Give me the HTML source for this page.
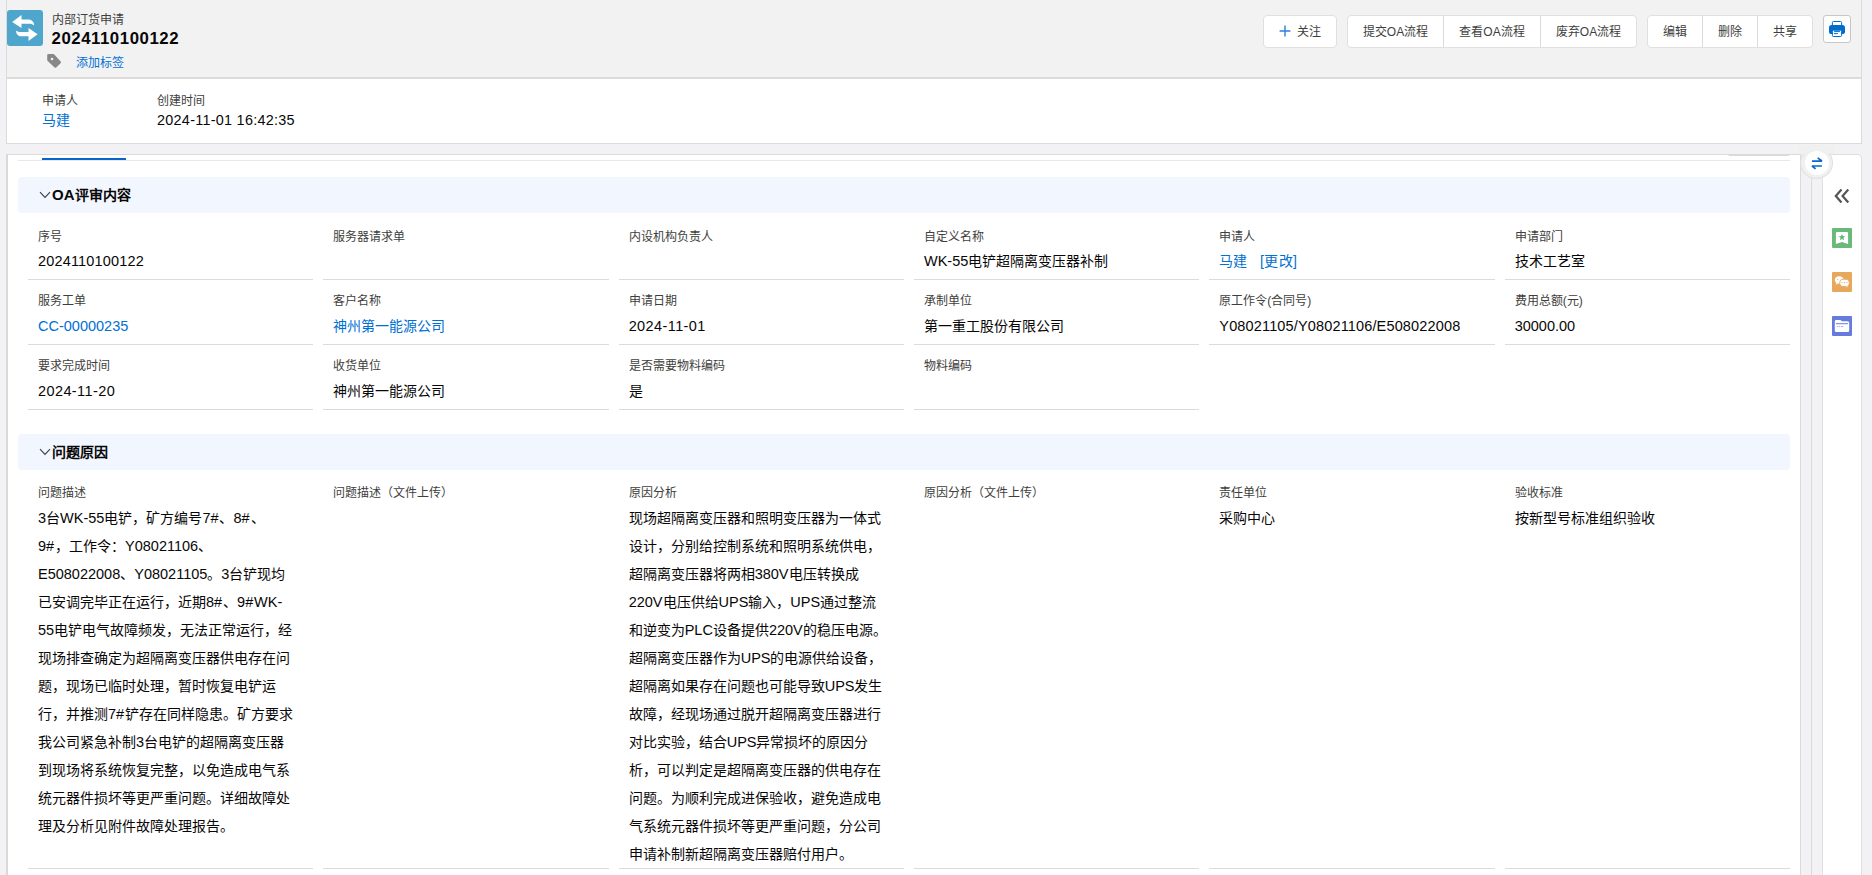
<!DOCTYPE html>
<html lang="zh-CN">
<head>
<meta charset="utf-8">
<title>内部订货申请 2024110100122</title>
<style>
*{box-sizing:border-box;margin:0;padding:0}
html,body{width:1872px;height:875px;overflow:hidden}
body{position:relative;background:#f2f2f4;font-family:"Liberation Sans",sans-serif;color:#080707;font-size:14px;-webkit-font-smoothing:antialiased}
.abs{position:absolute}
a{color:#0070d2;text-decoration:none}
/* top card */
#top{position:absolute;left:6px;top:-1px;width:1856px;height:145px;border:1px solid #dddbda;background:#fff}
#hdr{position:absolute;left:0;top:0;width:1854px;height:79px;background:#f3f2f2;border-bottom:2px solid #dddbda}
#ico{position:absolute;left:7px;top:10px;width:36px;height:36px;border-radius:3px;background:#4ea6cc}
.t12{position:absolute;font-size:12px;line-height:18px;color:#3e3e3c;white-space:nowrap}
.t14{position:absolute;font-size:14px;line-height:22px;color:#080707;white-space:nowrap}
#title{position:absolute;left:51.5px;top:28px;font-size:16.8px;letter-spacing:.55px;line-height:22px;font-weight:bold;color:#080707;white-space:nowrap}
/* buttons */
.btn{position:absolute;top:15px;height:33px;border:1px solid #e1e0df;background:#fff;border-radius:4px;font-size:12px;line-height:33px;color:#3e3e3c;white-space:nowrap;text-align:center}
.grp{position:absolute;top:15px;height:33px;border:1px solid #e1e0df;background:#fff;border-radius:4px;overflow:hidden;display:flex}
.grp span{display:block;height:31px;line-height:33px;font-size:12px;color:#3e3e3c;text-align:center;white-space:nowrap;border-left:1px solid #dddbda}
.grp span:first-child{border-left:0}
/* main card */
#main{position:absolute;left:6px;top:154px;width:1795px;height:740px;border:1px solid #dddbda;border-left:2px solid #dbd9d8;background:#fff}
.sec{position:absolute;left:18px;width:1772px;height:36px;background:#f2f6ff;border-radius:4px}
.sec b{position:absolute;left:34px;top:7px;font-size:14px;line-height:22px;font-weight:bold;color:#080707;white-space:nowrap}
.sec svg{position:absolute;left:21px;top:14px}
.ul{position:absolute;height:1px;width:285px;background:#dddbda}
.para{position:absolute;font-size:14px;line-height:28px;color:#080707;white-space:nowrap}
.n{font-size:14.5px}
.n i{font-style:normal;letter-spacing:.9px}
/* right rail */
#side{position:absolute;left:1822px;top:154px;width:40px;height:740px;border:1px solid #e0dfde;border-top-right-radius:4px;background:#fff}
.vl{position:absolute;width:1px;background:#dddbda}
</style>
</head>
<body>

<!-- ===== top card ===== -->
<div id="top"><div id="hdr"></div></div>

<div id="ico">
<svg width="36" height="36" viewBox="0 0 36 36">
<path fill="#fff" d="M5.2 11.9 L14.5 5 L14.5 9.6 L21 9.6 C25 9.6 27 12 27.2 15.6 C25.6 13.9 24 13.7 21 13.7 L14.5 13.7 L14.5 18 Z"/>
<path fill="#fff" d="M30.6 24.3 L21.5 18 L21.5 22 L15 22 C12 22 10.4 21.8 8.9 20.4 C9.2 24 11 26.2 15 26.2 L21.5 26.2 L21.5 31.1 Z"/>
</svg>
</div>
<div class="t12" style="left:51.5px;top:10.5px">内部订货申请</div>
<div id="title">2024110100122</div>
<svg class="abs" style="left:46px;top:53px" width="16" height="16" viewBox="0 0 16 16"><path fill="#888" d="M2.4 1 L7.3 1 Q7.9 1 8.3 1.45 L14.7 8.6 Q15.4 9.4 14.6 10.2 L10.2 14.4 Q9.4 15.1 8.6 14.4 L1.7 8 Q1.2 7.5 1.2 6.9 L1.2 2.2 Q1.2 1 2.4 1 Z M6 4.7 A1.3 1.3 0 1 0 6 7.3 A1.3 1.3 0 1 0 6 4.7 Z" fill-rule="evenodd"/></svg>
<a class="t12" style="left:76px;top:53.5px;color:#0070d2">添加标签</a>

<!-- buttons -->
<div class="btn" style="left:1263px;width:74px;text-align:left;padding-left:33px">关注</div>
<svg class="abs" style="left:1279px;top:25px" width="12" height="12" viewBox="0 0 12 12"><path d="M6 0.6V11.4M0.6 6H11.4" stroke="#2d80d8" stroke-width="1.4" fill="none"/></svg>
<div class="grp" style="left:1347px;width:290px"><span style="width:95px">提交OA流程</span><span style="width:97px">查看OA流程</span><span style="width:96px">废弃OA流程</span></div>
<div class="grp" style="left:1647px;width:166px"><span style="width:54px">编辑</span><span style="width:55px">删除</span><span style="width:55px">共享</span></div>
<div class="abs" style="left:1823px;top:15px;width:28px;height:28px;border:1px solid #c9c7c5;border-radius:3px;background:#fff"></div>
<svg class="abs" style="left:1829px;top:21px" width="16" height="16" viewBox="0 0 16 16">
<rect x="3.4" y="0.5" width="9.2" height="5.5" rx="1" fill="#fff" stroke="#006dcc" stroke-width="1"/>
<rect x="0" y="3.9" width="16" height="9.1" rx="2.6" fill="#006dcc"/>
<rect x="3.4" y="9.2" width="9.2" height="6.3" rx="1" fill="#fff" stroke="#006dcc" stroke-width="1"/>
<path d="M5.2 10.6H10.9M5 12.6H8.9" stroke="#006dcc" stroke-width="1" fill="none"/>
</svg>

<!-- summary row -->
<div class="t12" style="left:42px;top:92px">申请人</div>
<a class="t14" style="left:42px;top:109px;color:#0070d2">马建</a>
<div class="t12" style="left:157px;top:92px">创建时间</div>
<div class="t14" style="left:157px;top:109px;font-size:14.4px;letter-spacing:.28px">2024-11-01 16:42:35</div>

<!-- ===== main card ===== -->
<div id="main"></div>
<div class="abs" style="left:1728px;top:154px;width:62px;height:2px;background:#dcdad9;border-radius:0 0 2px 2px"></div>
<div class="abs" style="left:18px;top:160px;width:1772px;height:1px;background:#e3ece3"></div>
<div class="abs" style="left:42px;top:158px;width:84px;height:2px;background:#0764cb"></div>

<div class="sec" style="top:177px"><svg width="12" height="8" viewBox="0 0 12 8"><path d="M1 1.2L6 6.4L11 1.2" stroke="#3e3e3c" stroke-width="1.1" fill="none"/></svg><b><span style="font-size:15px">OA</span>评审内容</b></div>
<div class="sec" style="top:434px"><svg width="12" height="8" viewBox="0 0 12 8"><path d="M1 1.2L6 6.4L11 1.2" stroke="#3e3e3c" stroke-width="1.1" fill="none"/></svg><b>问题原因</b></div>

<!-- FIELDS -->
<div class="t12" style="left:38.0px;top:228px">序号</div>
<div class="t14" style="left:38.0px;top:250px;letter-spacing:.17px"><span class="n">2024110100122</span></div>
<div class="ul" style="left:28px;top:279px;width:285px"></div>
<div class="t12" style="left:333.33px;top:228px">服务器请求单</div>
<div class="ul" style="left:323px;top:279px;width:286px"></div>
<div class="t12" style="left:628.67px;top:228px">内设机构负责人</div>
<div class="ul" style="left:619px;top:279px;width:285px"></div>
<div class="t12" style="left:924.0px;top:228px">自定义名称</div>
<div class="t14" style="left:924.0px;top:250px"><span class="n">WK-55</span>电铲超隔离变压器补制</div>
<div class="ul" style="left:914px;top:279px;width:285px"></div>
<div class="t12" style="left:1219.33px;top:228px">申请人</div>
<div class="t14" style="left:1219.33px;top:250px"><a>马建</a>&nbsp;&nbsp;&nbsp;<a style="letter-spacing:.4px;margin-left:1px">[更改]</a></div>
<div class="ul" style="left:1209px;top:279px;width:286px"></div>
<div class="t12" style="left:1514.67px;top:228px">申请部门</div>
<div class="t14" style="left:1514.67px;top:250px">技术工艺室</div>
<div class="ul" style="left:1505px;top:279px;width:285px"></div>
<div class="t12" style="left:38.0px;top:292px">服务工单</div>
<div class="t14" style="left:38.0px;top:315px"><a><span class="n">CC-00000235</span></a></div>
<div class="ul" style="left:28px;top:344px;width:285px"></div>
<div class="t12" style="left:333.33px;top:292px">客户名称</div>
<div class="t14" style="left:333.33px;top:315px"><a>神州第一能源公司</a></div>
<div class="ul" style="left:323px;top:344px;width:286px"></div>
<div class="t12" style="left:628.67px;top:292px">申请日期</div>
<div class="t14" style="left:628.67px;top:315px;letter-spacing:.4px"><span class="n">2024-11-01</span></div>
<div class="ul" style="left:619px;top:344px;width:285px"></div>
<div class="t12" style="left:924.0px;top:292px">承制单位</div>
<div class="t14" style="left:924.0px;top:315px">第一重工股份有限公司</div>
<div class="ul" style="left:914px;top:344px;width:285px"></div>
<div class="t12" style="left:1219.33px;top:292px">原工作令(合同号)</div>
<div class="t14" style="left:1219.33px;top:315px;letter-spacing:.15px"><span class="n">Y08021105/Y08021106/E508022008</span></div>
<div class="ul" style="left:1209px;top:344px;width:286px"></div>
<div class="t12" style="left:1514.67px;top:292px">费用总额(元)</div>
<div class="t14" style="left:1514.67px;top:315px"><span class="n">30000.00</span></div>
<div class="ul" style="left:1505px;top:344px;width:285px"></div>
<div class="t12" style="left:38.0px;top:357px">要求完成时间</div>
<div class="t14" style="left:38.0px;top:380px;letter-spacing:.4px"><span class="n">2024-11-20</span></div>
<div class="ul" style="left:28px;top:409px;width:285px"></div>
<div class="t12" style="left:333.33px;top:357px">收货单位</div>
<div class="t14" style="left:333.33px;top:380px">神州第一能源公司</div>
<div class="ul" style="left:323px;top:409px;width:286px"></div>
<div class="t12" style="left:628.67px;top:357px">是否需要物料编码</div>
<div class="t14" style="left:628.67px;top:380px">是</div>
<div class="ul" style="left:619px;top:409px;width:285px"></div>
<div class="t12" style="left:924.0px;top:357px">物料编码</div>
<div class="ul" style="left:914px;top:409px;width:285px"></div>
<div class="t12" style="left:38.0px;top:484px">问题描述</div>
<div class="ul" style="left:28px;top:868px;width:285px"></div>
<div class="t12" style="left:333.33px;top:484px">问题描述（文件上传）</div>
<div class="ul" style="left:323px;top:868px;width:286px"></div>
<div class="t12" style="left:628.67px;top:484px">原因分析</div>
<div class="ul" style="left:619px;top:868px;width:285px"></div>
<div class="t12" style="left:924.0px;top:484px">原因分析（文件上传）</div>
<div class="ul" style="left:914px;top:868px;width:285px"></div>
<div class="t12" style="left:1219.33px;top:484px">责任单位</div>
<div class="ul" style="left:1209px;top:868px;width:286px"></div>
<div class="t12" style="left:1514.67px;top:484px">验收标准</div>
<div class="ul" style="left:1505px;top:868px;width:285px"></div>
<div class="para" style="left:38.0px;top:504px"><span class="n">3</span>台<span class="n">WK-55</span>电铲，矿方编号<span class="n">7<i>#</i></span>、<span class="n">8<i>#</i></span>、<br><span class="n">9<i>#</i></span>，工作令：<span class="n">Y08021106</span>、<br><span class="n">E508022008</span>、<span class="n">Y08021105</span>。<span class="n">3</span>台铲现均<br>已安调完毕正在运行，近期<span class="n">8<i>#</i></span>、<span class="n">9<i>#</i>WK-</span><br><span class="n">55</span>电铲电气故障频发，无法正常运行，经<br>现场排查确定为超隔离变压器供电存在问<br>题，现场已临时处理，暂时恢复电铲运<br>行，并推测<span class="n">7<i>#</i></span>铲存在同样隐患。矿方要求<br>我公司紧急补制<span class="n">3</span>台电铲的超隔离变压器<br>到现场将系统恢复完整，以免造成电气系<br>统元器件损坏等更严重问题。详细故障处<br>理及分析见附件故障处理报告。</div>
<div class="para" style="left:628.67px;top:504px">现场超隔离变压器和照明变压器为一体式<br>设计，分别给控制系统和照明系统供电，<br>超隔离变压器将两相<span class="n">380V</span>电压转换成<br><span class="n">220V</span>电压供给<span class="n">UPS</span>输入，<span class="n">UPS</span>通过整流<br>和逆变为<span class="n">PLC</span>设备提供<span class="n">220V</span>的稳压电源。<br>超隔离变压器作为<span class="n">UPS</span>的电源供给设备，<br>超隔离如果存在问题也可能导致<span class="n">UPS</span>发生<br>故障，经现场通过脱开超隔离变压器进行<br>对比实验，结合<span class="n">UPS</span>异常损坏的原因分<br>析，可以判定是超隔离变压器的供电存在<br>问题。为顺利完成进保验收，避免造成电<br>气系统元器件损坏等更严重问题，分公司<br>申请补制新超隔离变压器赔付用户。</div>
<div class="para" style="left:1219.33px;top:504px">采购中心</div>
<div class="para" style="left:1514.67px;top:504px">按新型号标准组织验收</div>
<!-- /FIELDS -->

<!-- ===== right rail ===== -->
<div class="vl" style="left:1811px;top:176px;height:710px"></div>
<div id="side"></div>
<div class="abs" style="left:1800px;top:147px;width:33px;height:32px;border-radius:50%;background:#f0f0f0;border:1px solid #e2e0df"></div>
<div class="abs" style="left:1799px;top:145px;width:35px;height:9px;background:#f0f0f0"></div>
<div class="abs" style="left:1805px;top:151px;width:24px;height:24px;border-radius:50%;background:#fff"></div>
<svg class="abs" style="left:1811px;top:156px" width="12" height="14" viewBox="0 0 12 14"><path d="M1 5.05H10.9L6.7 1.9M10.9 10H1L4.6 12.9" stroke="#0768cc" stroke-width="1.7" fill="none" stroke-linejoin="bevel"/></svg>
<svg class="abs" style="left:1834px;top:188px" width="16" height="16" viewBox="0 0 16 16"><path d="M7.5 1.6L1.8 8L7.5 14.4M14.3 1.6L8.6 8L14.3 14.4" stroke="#555" stroke-width="2.2" fill="none"/></svg>

<svg class="abs" style="left:1832px;top:228px" width="20" height="20" viewBox="0 0 20 20">
<rect width="20" height="20" rx="1" fill="#69b97b"/>
<path fill="#fff" d="M5.1 4H14.9Q16.1 4 16.1 5.2V16L10 13.9L3.9 16V5.2Q3.9 4 5.1 4Z"/>
<path fill="#69b97b" d="M10 5.9L10.95 8.1L13.3 8.3L11.5 9.85L12.05 12.2L10 10.95L7.95 12.2L8.5 9.85L6.7 8.3L9.05 8.1Z"/>
</svg>
<svg class="abs" style="left:1832px;top:272px" width="20" height="20" viewBox="0 0 20 20">
<rect width="20" height="20" rx="1" fill="#e8a85b"/>
<path fill="#fff" d="M7.2 4.3C4.7 4.3 2.8 5.9 2.8 7.9C2.8 9 3.4 9.9 4.3 10.6L3.9 12.8L6 11.4C6.4 11.5 6.8 11.5 7.2 11.5C9.7 11.5 11.6 9.9 11.6 7.9C11.6 5.9 9.7 4.3 7.2 4.3Z"/>
<path fill="#fff" stroke="#e8a85b" stroke-width="0.9" d="M11 7.2H14Q17.3 7.2 17.3 10.4V11.2Q17.3 13 15.8 13.9L16 16L13.8 14.5H11Q7.7 14.5 7.7 11.2V10.4Q7.7 7.2 11 7.2Z"/>
<circle cx="5.8" cy="7.6" r="0.65" fill="#e8a85b"/>
<circle cx="10" cy="10.6" r="0.65" fill="#e8a85b"/><circle cx="12.5" cy="10.6" r="0.65" fill="#e8a85b"/><circle cx="15" cy="10.6" r="0.65" fill="#e8a85b"/>
</svg>
<svg class="abs" style="left:1832px;top:316px" width="20" height="20" viewBox="0 0 20 20">
<rect width="20" height="20" rx="1" fill="#667bdb"/>
<path fill="#fff" d="M4.2 4H8.2Q8.8 4 9.2 4.5L9.9 5.3H15.6Q17.2 5.3 17.2 6.9V14.4Q17.2 16 15.6 16H4.4Q2.8 16 2.8 14.4V5.4Q2.8 4 4.2 4Z"/>
<path d="M4.3 7.6H15.7" stroke="#8595e3" stroke-width="1.1" stroke-linecap="round"/>
<path d="M5.2 10.5H5.8M7.2 10.5H7.8M9.4 10.5H11" stroke="#a9b4ec" stroke-width="1" stroke-linecap="round"/>
</svg>

</body>
</html>
